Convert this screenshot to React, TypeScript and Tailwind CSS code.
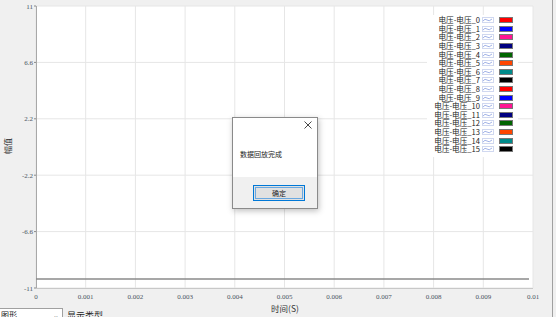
import React from 'react';

const colors = [
  '#ff0000', '#0000ff', '#ff1493', '#000080', '#006400', '#ff4500', '#008b8b', '#000000',
  '#ff0000', '#0000ff', '#ff1493', '#000080', '#006400', '#ff4500', '#008b8b', '#000000',
];

const xTicks = ['0', '0.001', '0.002', '0.003', '0.004', '0.005', '0.006', '0.007', '0.008', '0.009', '0.01'];
const yTicks = ['11', '6.6', '2.2', '-2.2', '-6.6', '-11'];

const L = 36;
const R = 533;
const T = 6;
const B = 288;

export default function App() {
  const dx = (R - L) / 10;
  const dy = (B - T) / 5;

  return (
    <div className="relative w-[556px] h-[317px] overflow-hidden bg-[#f0f0f0] font-['Noto_Sans_CJK_SC',sans-serif]">
      <svg className="absolute left-0 top-0" width={556} height={317}>
        <rect x={L} y={T} width={R - L} height={B - T} fill="#fff" />
        {xTicks.map((_, i) => (
          <line key={'gx' + i} x1={L + dx * i} y1={T} x2={L + dx * i} y2={B} stroke="#e6e6e6" strokeWidth={1} />
        ))}
        {yTicks.map((_, j) => (
          <line key={'gy' + j} x1={L} y1={T + dy * j} x2={R} y2={T + dy * j} stroke="#e6e6e6" strokeWidth={1} />
        ))}
        <line x1={L + 0.5} y1={T} x2={L + 0.5} y2={B} stroke="#a8a8a8" />
        <line x1={L} y1={B + 0.5} x2={R} y2={B + 0.5} stroke="#c8c8c8" />
        {yTicks.map((t, j) => (
          <g key={'ty' + j}>
            <line x1={L - 2} y1={T + dy * j} x2={L} y2={T + dy * j} stroke="#888" />
            <text x={L - 3} y={T + dy * j + 2.5} textAnchor="end" fontSize={7} fill="#4b5563" fontFamily="'Liberation Serif', serif">{t}</text>
          </g>
        ))}
        {xTicks.map((t, i) => (
          <text key={'tx' + i} x={L + dx * i} y={299} textAnchor="middle" fontSize={7} fill="#4b5563" fontFamily="'Liberation Serif', serif">{t}</text>
        ))}
        <line x1={L} y1={279} x2={529} y2={279} stroke="#8a8a8a" strokeWidth={1.6} />
        <line x1={552.5} y1={0} x2={552.5} y2={317} stroke="#a0a0a0" />
        <text x={285} y={312} textAnchor="middle" fontSize={8.5} fill="#333" fontFamily="'Noto Sans CJK SC', sans-serif">时间(S)</text>
        <text x={0} y={0} transform="translate(11,146) rotate(-90)" textAnchor="middle" fontSize={8} fill="#333" fontFamily="'Noto Sans CJK SC', sans-serif">幅值</text>
      </svg>

      {/* legend */}
      <div className="absolute left-[427px] top-[15px] w-[91px] h-[142px] bg-white pt-[1px] flex flex-col">
        {colors.map((c, i) => (
          <div key={i} className="flex items-center h-[8.6px] justify-end pr-[5px]">
            <span className="text-[7.6px] leading-[8px] text-[#222] whitespace-nowrap">电压-电压_{i}</span>
            <svg width={12} height={6} className="ml-[2px]">
              <rect x={0.5} y={0.5} width={11} height={5} fill="#fff" stroke="#d0d8f0" />
              <path d="M1 4 Q3 1 5 3 T10 2" fill="none" stroke="#8aa0e0" strokeWidth={0.8} />
            </svg>
            <span className="ml-[5px] w-[14px] h-[6px] border border-[#777]" style={{ backgroundColor: c }} />
          </div>
        ))}
      </div>

      {/* dialog */}
      <div className="absolute left-[232px] top-[117px] w-[86px] h-[92px] border border-[#8a8a8a] bg-[#f0f0f0] flex flex-col shadow-[1px_2px_6px_rgba(0,0,0,0.25)]">
        <div className="bg-white h-[59px] relative">
          <svg className="absolute right-[5px] top-[3px]" width={8} height={8}>
            <path d="M0.5 0.5 L7.5 7.5 M7.5 0.5 L0.5 7.5" stroke="#333" strokeWidth={0.9} />
          </svg>
          <div className="absolute left-[7px] top-[33px] text-[7px] leading-none text-[#222]">数据回放完成</div>
        </div>
        <div className="flex-1 flex justify-end pr-[12px] pt-[8px]">
          <div className="w-[52px] h-[16px] border border-[#0078d7] bg-[#e1e1e1] flex items-center justify-center">
            <div className="w-[48px] h-[12px] border border-[#6aa8e0] flex items-center justify-center text-[7px] leading-none text-[#222]">确定</div>
          </div>
        </div>
      </div>

      {/* bottom controls */}
      <div className="absolute left-0 top-[308px] flex items-start">
        <div className="w-[63px] h-[14px] bg-white border border-[#a0a0a0] border-l-0 flex items-start justify-between px-[1px]">
          <span className="text-[8px] leading-none text-[#222] mt-[2px]">图形</span>
          <span className="text-[7px] leading-none text-[#555] mt-[3px] mr-[2px]">⌄</span>
        </div>
        <span className="ml-[4px] text-[9px] leading-none text-[#222] mt-[3px]">显示类型</span>
      </div>
    </div>
  );
}
